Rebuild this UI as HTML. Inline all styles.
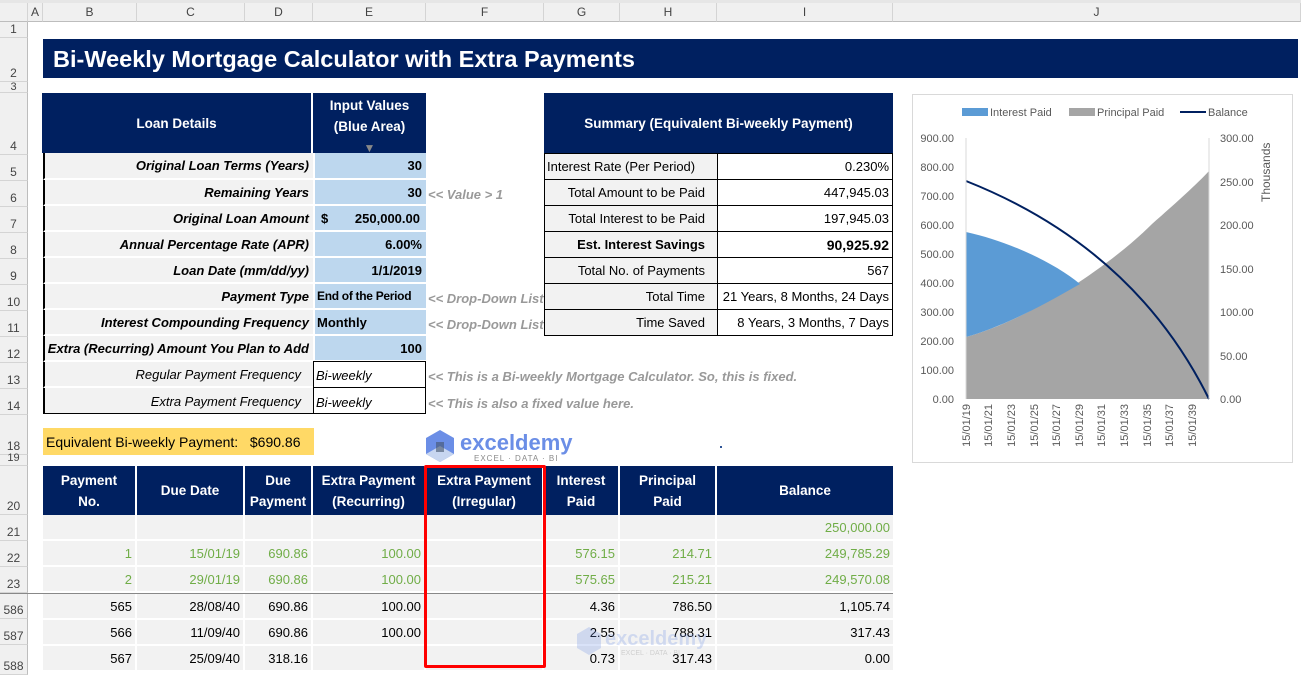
<!DOCTYPE html>
<html><head><meta charset="utf-8"><style>
body{margin:0;width:1301px;height:675px;overflow:hidden;background:#fff;font-family:"Liberation Sans",sans-serif;position:relative}
div{position:absolute;box-sizing:border-box}
.ch{top:3px;height:19px;background:#f0f0f0;border-right:1px solid #d4d4d4;border-bottom:1px solid #bdbdbd;font-size:12px;color:#444;text-align:center;line-height:19px}
.rh{left:0;width:28px;background:#f0f0f0;border-bottom:1px solid #d4d4d4;border-right:1px solid #bdbdbd;font-size:12px;color:#444;text-align:center;display:flex;align-items:flex-end;justify-content:center;padding-bottom:1px}
.lb{left:43px;width:270px;background:#f2f2f2;border-left:2px solid #000;border-bottom:2px solid #fff;font-size:13px;font-weight:bold;font-style:italic;text-align:right;padding-right:4px;display:flex;align-items:center;justify-content:flex-end;white-space:nowrap}
.in{left:313px;width:113px;background:#bdd7ee;border-left:2px solid #fff;border-bottom:2px solid #fff;font-size:13px;font-weight:bold;text-align:right;padding-right:4px;display:flex;align-items:center;justify-content:flex-end;white-space:nowrap}
.nt{left:428px;font-size:13px;font-style:italic;font-weight:bold;color:#999;white-space:nowrap}
.sl{left:544px;width:174px;background:#f2f2f2;border:1px solid #000;border-top:none;font-size:13px;text-align:right;padding-right:12px;display:flex;align-items:center;justify-content:flex-end;white-space:nowrap}
.sv{left:717px;width:176px;border:1px solid #000;border-top:none;font-size:13px;text-align:right;padding-right:3px;display:flex;align-items:center;justify-content:flex-end;white-space:nowrap}
.th{top:466px;height:49px;background:#002060;color:#fff;font-weight:bold;font-size:13.5px;text-align:center;display:flex;align-items:center;justify-content:center;border-right:2px solid #fff;line-height:21px;white-space:nowrap}
.td{height:26px;background:#f2f2f2;font-size:13px;text-align:right;padding-right:3px;border-right:2px solid #fff;border-bottom:2px solid #fff;display:flex;align-items:center;justify-content:flex-end;white-space:nowrap}
.g{color:#70ad47}
</style></head><body>
<div style="left:0;top:0;width:1301px;height:3px;background:#e6e6e6"></div>
<div class="ch" style="left:0;width:28px"></div>
<div class="ch" style="left:28px;width:15px">A</div>
<div class="ch" style="left:43px;width:94px">B</div>
<div class="ch" style="left:137px;width:108px">C</div>
<div class="ch" style="left:245px;width:68px">D</div>
<div class="ch" style="left:313px;width:113px">E</div>
<div class="ch" style="left:426px;width:118px">F</div>
<div class="ch" style="left:544px;width:76px">G</div>
<div class="ch" style="left:620px;width:97px">H</div>
<div class="ch" style="left:717px;width:176px">I</div>
<div class="ch" style="left:893px;width:408px">J</div>

<div class="rh" style="top:22px;height:16px">1</div>
<div class="rh" style="top:38px;height:44px">2</div>
<div class="rh" style="top:82px;height:11px;line-height:8px;font-size:11px">3</div>
<div class="rh" style="top:93px;height:62px">4</div>
<div class="rh" style="top:155px;height:26px">5</div>
<div class="rh" style="top:181px;height:26px">6</div>
<div class="rh" style="top:207px;height:26px">7</div>
<div class="rh" style="top:233px;height:26px">8</div>
<div class="rh" style="top:259px;height:26px">9</div>
<div class="rh" style="top:285px;height:26px">10</div>
<div class="rh" style="top:311px;height:26px">11</div>
<div class="rh" style="top:337px;height:26px">12</div>
<div class="rh" style="top:363px;height:26px">13</div>
<div class="rh" style="top:389px;height:26px">14</div>
<div class="rh" style="top:415px;height:40px">18</div>
<div class="rh" style="top:455px;height:11px;font-size:11px">19</div>
<div class="rh" style="top:466px;height:49px">20</div>
<div class="rh" style="top:515px;height:26px">21</div>
<div class="rh" style="top:541px;height:26px">22</div>
<div class="rh" style="top:567px;height:26px">23</div>
<div class="rh" style="top:593px;height:26px">586</div>
<div class="rh" style="top:619px;height:26px">587</div>
<div class="rh" style="top:645px;height:30px">588</div>
<div style="left:0;top:593px;width:893px;height:1px;background:#888"></div>

<div style="left:43px;top:39px;width:1255px;height:39px;background:#002060;color:#fff;font-size:23.5px;font-weight:bold;padding-left:10px;line-height:40px">Bi-Weekly Mortgage Calculator with Extra Payments</div>

<div style="left:42px;top:93px;width:271px;height:60px;background:#002060;color:#fff;font-weight:bold;font-size:13.5px;text-align:center;line-height:62px;border-right:2px solid #fff">Loan Details</div>
<div style="left:313px;top:93px;width:113px;height:60px;background:#002060;color:#fff;font-weight:bold;font-size:13.5px;text-align:center;line-height:21px;padding-top:2px">Input Values<br>(Blue Area)<br><span style="color:#888;font-size:12px">&#9660;</span></div>

<div class="lb" style="top:153px;height:27px">Original Loan Terms (Years)</div><div class="in" style="top:153px;height:27px">30</div>
<div class="lb" style="top:180px;height:26px">Remaining Years</div><div class="in" style="top:180px;height:26px">30</div>
<div class="lb" style="top:206px;height:26px">Original Loan Amount</div><div class="in" style="top:206px;height:26px;justify-content:space-between;padding-left:6px;padding-right:6px"><span>$</span><span>250,000.00</span></div>
<div class="lb" style="top:232px;height:26px">Annual Percentage Rate (APR)</div><div class="in" style="top:232px;height:26px">6.00%</div>
<div class="lb" style="top:258px;height:26px">Loan Date (mm/dd/yy)</div><div class="in" style="top:258px;height:26px">1/1/2019</div>
<div class="lb" style="top:284px;height:26px">Payment Type</div><div class="in" style="top:284px;height:26px;justify-content:flex-start;padding-left:2px;font-size:12px;letter-spacing:-0.3px">End of the Period</div>
<div class="lb" style="top:310px;height:26px">Interest Compounding Frequency</div><div class="in" style="top:310px;height:26px;justify-content:flex-start;padding-left:2px">Monthly</div>
<div class="lb" style="top:336px;height:26px">Extra (Recurring) Amount You Plan to Add</div><div class="in" style="top:336px;height:26px">100</div>
<div class="lb" style="top:362px;height:26px;font-weight:normal;padding-right:12px">Regular Payment Frequency</div>
<div style="left:313px;top:361px;width:113px;height:27px;border:1px solid #000;font-size:13px;font-style:italic;padding-left:2px;line-height:28px">Bi-weekly</div>
<div class="lb" style="top:388px;height:26px;font-weight:normal;padding-right:12px;border-bottom:none">Extra Payment Frequency</div>
<div style="left:313px;top:387px;width:113px;height:27px;border:1px solid #000;font-size:13px;font-style:italic;padding-left:2px;line-height:30px">Bi-weekly</div>
<div style="left:43px;top:413px;width:383px;height:1px;background:#000"></div>

<div class="nt" style="top:187px">&lt;&lt; Value &gt; 1</div>
<div class="nt" style="top:291px">&lt;&lt; Drop-Down List</div>
<div class="nt" style="top:317px">&lt;&lt; Drop-Down List</div>
<div class="nt" style="top:369px">&lt;&lt; This is a Bi-weekly Mortgage Calculator. So, this is fixed.</div>
<div class="nt" style="top:396px">&lt;&lt; This is also a fixed value here.</div>

<div style="left:544px;top:93px;width:349px;height:60px;background:#002060;color:#fff;font-weight:bold;font-size:13.5px;text-align:center;line-height:62px">Summary (Equivalent Bi-weekly Payment)</div>
<div class="sl" style="top:153px;height:27px;border-top:1px solid #000;justify-content:flex-start;padding-left:2px">Interest Rate (Per Period)</div><div class="sv" style="top:153px;height:27px;border-top:1px solid #000">0.230%</div>
<div class="sl" style="top:180px;height:26px">Total Amount to be Paid</div><div class="sv" style="top:180px;height:26px">447,945.03</div>
<div class="sl" style="top:206px;height:26px">Total Interest to be Paid</div><div class="sv" style="top:206px;height:26px">197,945.03</div>
<div class="sl" style="top:232px;height:26px;font-weight:bold">Est. Interest Savings</div><div class="sv" style="top:232px;height:26px;font-weight:bold;font-size:14px">90,925.92</div>
<div class="sl" style="top:258px;height:26px">Total No. of Payments</div><div class="sv" style="top:258px;height:26px">567</div>
<div class="sl" style="top:284px;height:26px">Total Time</div><div class="sv" style="top:284px;height:26px">21 Years, 8 Months, 24 Days</div>
<div class="sl" style="top:310px;height:26px">Time Saved</div><div class="sv" style="top:310px;height:26px">8 Years, 3 Months, 7 Days</div>

<div style="left:43px;top:428px;width:271px;height:27px;background:#ffd966;font-size:14px;line-height:29px;padding-left:3px;white-space:nowrap">Equivalent Bi-weekly Payment:&nbsp;&nbsp;&nbsp;$690.86</div>

<svg style="position:absolute;left:424px;top:428px" width="160" height="36"><polygon points="16,2 30,10 30,26 16,34 2,26 2,10" fill="#6b8ee6"/><polygon points="16,18 30,26 16,34 2,26" fill="#c8d6f0"/><rect x="12" y="14" width="8" height="10" fill="#44546a" opacity=".6"/>
<text x="36" y="22" font-family="Liberation Sans" font-size="22" font-weight="bold" fill="#6b8ee6">exceldemy</text><text x="50" y="33" font-family="Liberation Sans" font-size="8" fill="#8a8a8a" letter-spacing="1">EXCEL · DATA · BI</text></svg>
<div style="left:720px;top:446px;width:2px;height:2px;background:#2f5597"></div>

<div class="th" style="left:43px;width:94px">Payment<br>No.</div>
<div class="th" style="left:137px;width:108px">Due Date</div>
<div class="th" style="left:245px;width:68px">Due<br>Payment</div>
<div class="th" style="left:313px;width:113px">Extra Payment<br>(Recurring)</div>
<div class="th" style="left:426px;width:118px">Extra Payment<br>(Irregular)</div>
<div class="th" style="left:544px;width:76px">Interest<br>Paid</div>
<div class="th" style="left:620px;width:97px">Principal<br>Paid</div>
<div class="th" style="left:717px;width:176px;border-right:none">Balance</div>
<div style="left:43px;top:540px;width:850px;height:1px;background:#000"></div>

<div class="td" style="left:43px;top:515px;width:94px"></div><div class="td" style="left:137px;top:515px;width:108px"></div><div class="td" style="left:245px;top:515px;width:68px"></div><div class="td" style="left:313px;top:515px;width:113px"></div><div class="td" style="left:426px;top:515px;width:118px"></div><div class="td" style="left:544px;top:515px;width:76px"></div><div class="td" style="left:620px;top:515px;width:97px"></div><div class="td g" style="left:717px;top:515px;width:176px;border-right:none">250,000.00</div>

<div class="td g" style="left:43px;top:541px;width:94px">1</div><div class="td g" style="left:137px;top:541px;width:108px">15/01/19</div><div class="td g" style="left:245px;top:541px;width:68px">690.86</div><div class="td g" style="left:313px;top:541px;width:113px">100.00</div><div class="td" style="left:426px;top:541px;width:118px"></div><div class="td g" style="left:544px;top:541px;width:76px">576.15</div><div class="td g" style="left:620px;top:541px;width:97px">214.71</div><div class="td g" style="left:717px;top:541px;width:176px;border-right:none">249,785.29</div>

<div class="td g" style="left:43px;top:567px;width:94px">2</div><div class="td g" style="left:137px;top:567px;width:108px">29/01/19</div><div class="td g" style="left:245px;top:567px;width:68px">690.86</div><div class="td g" style="left:313px;top:567px;width:113px">100.00</div><div class="td" style="left:426px;top:567px;width:118px"></div><div class="td g" style="left:544px;top:567px;width:76px">575.65</div><div class="td g" style="left:620px;top:567px;width:97px">215.21</div><div class="td g" style="left:717px;top:567px;width:176px;border-right:none">249,570.08</div>

<div class="td" style="left:43px;top:594px;width:94px">565</div><div class="td" style="left:137px;top:594px;width:108px">28/08/40</div><div class="td" style="left:245px;top:594px;width:68px">690.86</div><div class="td" style="left:313px;top:594px;width:113px">100.00</div><div class="td" style="left:426px;top:594px;width:118px"></div><div class="td" style="left:544px;top:594px;width:76px">4.36</div><div class="td" style="left:620px;top:594px;width:97px">786.50</div><div class="td" style="left:717px;top:594px;width:176px;border-right:none">1,105.74</div>

<div class="td" style="left:43px;top:620px;width:94px">566</div><div class="td" style="left:137px;top:620px;width:108px">11/09/40</div><div class="td" style="left:245px;top:620px;width:68px">690.86</div><div class="td" style="left:313px;top:620px;width:113px">100.00</div><div class="td" style="left:426px;top:620px;width:118px"></div><div class="td" style="left:544px;top:620px;width:76px">2.55</div><div class="td" style="left:620px;top:620px;width:97px">788.31</div><div class="td" style="left:717px;top:620px;width:176px;border-right:none">317.43</div>

<div class="td" style="left:43px;top:646px;width:94px">567</div><div class="td" style="left:137px;top:646px;width:108px">25/09/40</div><div class="td" style="left:245px;top:646px;width:68px">318.16</div><div class="td" style="left:313px;top:646px;width:113px"></div><div class="td" style="left:426px;top:646px;width:118px"></div><div class="td" style="left:544px;top:646px;width:76px">0.73</div><div class="td" style="left:620px;top:646px;width:97px">317.43</div><div class="td" style="left:717px;top:646px;width:176px;border-right:none">0.00</div>

<svg style="position:absolute;left:575px;top:625px;opacity:.25" width="150" height="36"><polygon points="14,2 26,9 26,23 14,30 2,23 2,9" fill="#6b8ee6"/><text x="30" y="20" font-family="Liberation Sans" font-size="20" font-weight="bold" fill="#6b8ee6">exceldemy</text><text x="46" y="30" font-family="Liberation Sans" font-size="7" fill="#666">EXCEL · DATA · BI</text></svg>

<div style="left:424px;top:465px;width:122px;height:203px;border:3px solid #f00;border-radius:2px"></div>

<svg style="position:absolute;left:912px;top:94px" width="381" height="369" font-family="Liberation Sans" font-size="11" fill="#595959">
<rect x="0.5" y="0.5" width="380" height="368" fill="#fff" stroke="#d9d9d9"/>
<rect x="50" y="14" width="26" height="8" fill="#5b9bd5"/><text x="78" y="22">Interest Paid</text>
<rect x="157" y="14" width="26" height="8" fill="#a5a5a5"/><text x="185" y="22">Principal Paid</text>
<line x1="268" y1="18" x2="294" y2="18" stroke="#002060" stroke-width="2"/><text x="296" y="22">Balance</text>
<path d="M54,243 C120,225 200,170 240,130 C265,108 285,90 297,77 L297,305 L54,305 Z" fill="#a5a5a5"/>
<path d="M54,138 C95,147 140,167 168,190 C130,212 90,233 54,243 Z" fill="#5b9bd5"/>
<path d="M54,87 C150,125 240,190 297,305" fill="none" stroke="#002060" stroke-width="2"/>
<line x1="54" y1="44" x2="54" y2="305" stroke="#d9d9d9"/><line x1="297" y1="44" x2="297" y2="305" stroke="#d9d9d9"/>
<g text-anchor="end">
<text x="42" y="48">900.00</text><text x="42" y="77">800.00</text><text x="42" y="106">700.00</text><text x="42" y="135">600.00</text><text x="42" y="164">500.00</text><text x="42" y="193">400.00</text><text x="42" y="222">300.00</text><text x="42" y="251">200.00</text><text x="42" y="280">100.00</text><text x="42" y="309">0.00</text></g>
<text x="308" y="48">300.00</text><text x="308" y="92">250.00</text><text x="308" y="135">200.00</text><text x="308" y="179">150.00</text><text x="308" y="222">100.00</text><text x="308" y="266">50.00</text><text x="308" y="309">0.00</text>
<text transform="translate(358,108) rotate(-90)" font-size="12">Thousands</text>
<g text-anchor="end">
<text transform="translate(58,310) rotate(-90)">15/01/19</text><text transform="translate(80,310) rotate(-90)">15/01/21</text><text transform="translate(103,310) rotate(-90)">15/01/23</text><text transform="translate(126,310) rotate(-90)">15/01/25</text><text transform="translate(148,310) rotate(-90)">15/01/27</text><text transform="translate(171,310) rotate(-90)">15/01/29</text><text transform="translate(193,310) rotate(-90)">15/01/31</text><text transform="translate(216,310) rotate(-90)">15/01/33</text><text transform="translate(239,310) rotate(-90)">15/01/35</text><text transform="translate(261,310) rotate(-90)">15/01/37</text><text transform="translate(284,310) rotate(-90)">15/01/39</text></g>
</svg>
</body></html>
